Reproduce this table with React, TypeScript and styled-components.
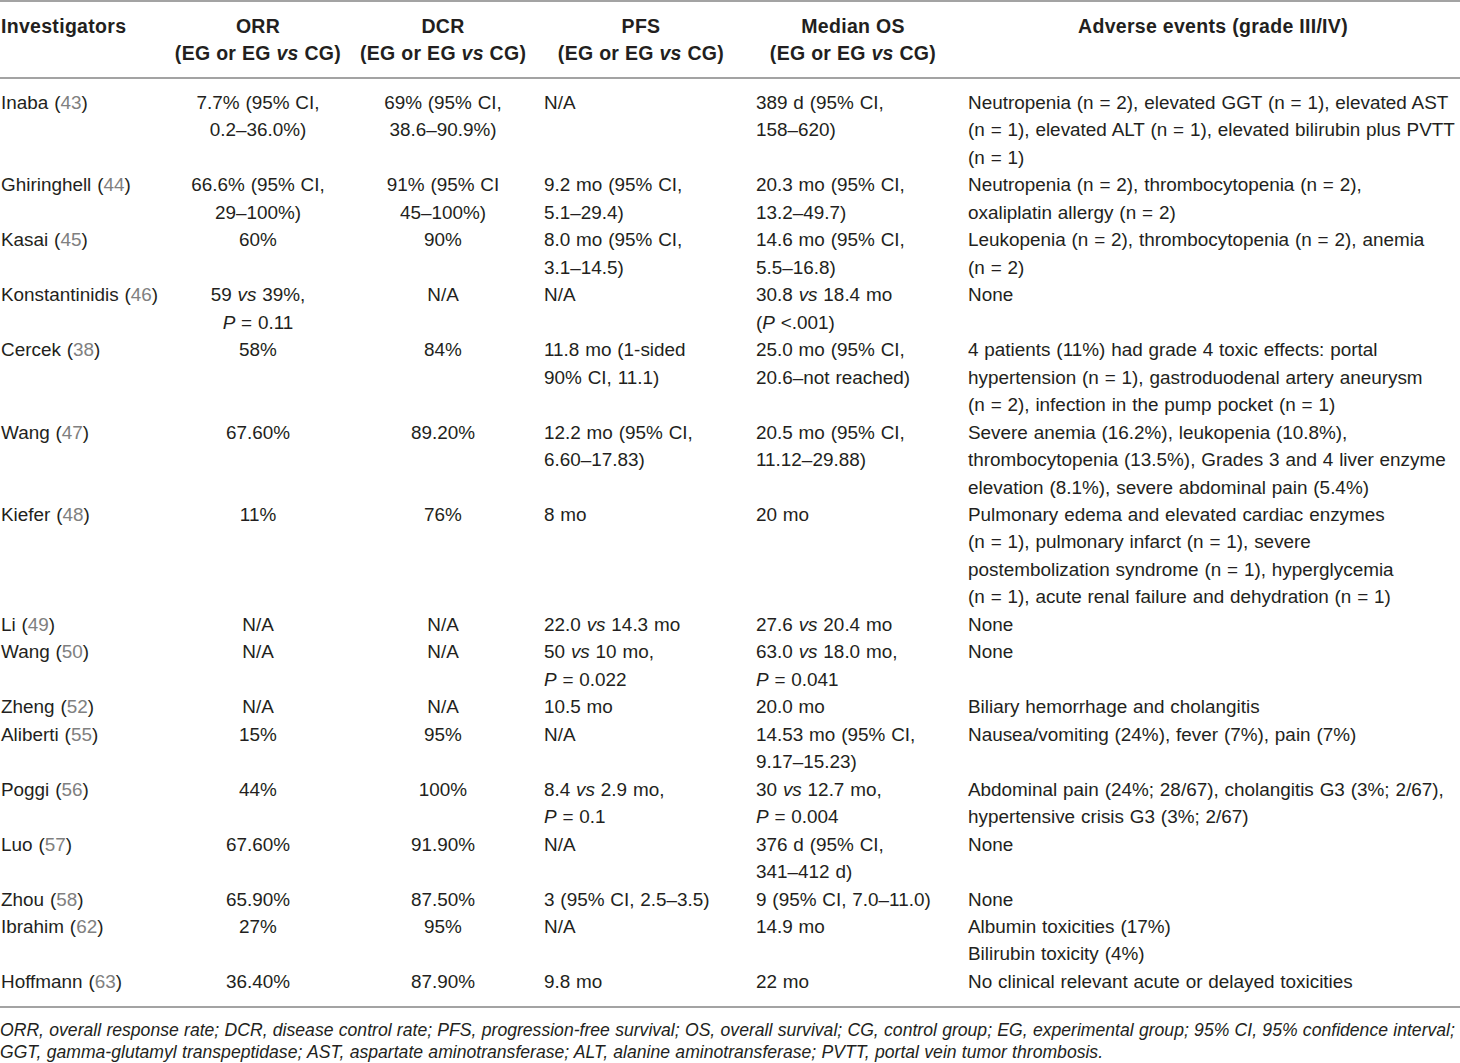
import React from "react";
import styled, { createGlobalStyle } from "styled-components";

const GlobalStyle = createGlobalStyle`
  html, body { margin: 0; padding: 0; background: #ffffff; }
`;

const Page = styled.div`
  width: 1460px;
  font-family: "Liberation Sans", Arial, sans-serif;
  color: #231f20;
`;

const Table = styled.table`
  width: 1460px;
  border-collapse: collapse;
  table-layout: fixed;
  font-size: 18.9px;
  word-spacing: 0.6px;
  line-height: 27.47px;
  border-top: 2px solid #a3a3a3;
  border-bottom: 2px solid #a3a3a3;
`;

const HeadRow = styled.tr`
  border-bottom: 2px solid #a3a3a3;
`;

const HeadCell = styled.th<{ $align?: "left" | "center" }>`
  font-weight: bold;
  font-size: 19.5px;
  letter-spacing: 0.3px;
  word-spacing: 0;
  text-align: ${(p) => p.$align || "center"};
  vertical-align: top;
  padding: 11px 9px 9px;
  &:first-child { padding-left: 1px; }
  &:last-child { padding-right: 2px; }
`;

const Row = styled.tr<{ $first?: boolean; $last?: boolean }>`
  & > td {
    padding-top: ${(p) => (p.$first ? "10px" : "0")};
    padding-bottom: ${(p) => (p.$last ? "11px" : "0")};
  }
`;

const Cell = styled.td<{ $align?: "left" | "center" }>`
  text-align: ${(p) => p.$align || "left"};
  vertical-align: top;
  padding-left: 9px;
  padding-right: 9px;
  &:first-child { padding-left: 1px; padding-right: 0; }
  &:last-child { padding-right: 2px; }
`;

const Line = styled.span`
  display: block;
  white-space: nowrap;
`;

const Ref = styled.span`
  color: #808080;
`;

const Em = styled.i`
  font-style: italic;
`;

const Footnote = styled.div`
  font-style: italic;
  font-size: 17.6px;
  word-spacing: 0.4px;
  line-height: 22px;
  padding-top: 11px;
  white-space: nowrap;
`;

type Content = React.ReactNode[];

interface RowData {
  name: string;
  ref: string;
  orr: Content;
  dcr: Content;
  pfs: Content;
  os: Content;
  ae: Content;
}

const rows: RowData[] = [
  {
    name: "Inaba",
    ref: "43",
    orr: ["7.7% (95% CI,", "0.2–36.0%)"],
    dcr: ["69% (95% CI,", "38.6–90.9%)"],
    pfs: ["N/A"],
    os: ["389 d (95% CI,", "158–620)"],
    ae: [
      "Neutropenia (n = 2), elevated GGT (n = 1), elevated AST",
      "(n = 1), elevated ALT (n = 1), elevated bilirubin plus PVTT",
      "(n = 1)",
    ],
  },
  {
    name: "Ghiringhell",
    ref: "44",
    orr: ["66.6% (95% CI,", "29–100%)"],
    dcr: ["91% (95% CI", "45–100%)"],
    pfs: ["9.2 mo (95% CI,", "5.1–29.4)"],
    os: ["20.3 mo (95% CI,", "13.2–49.7)"],
    ae: ["Neutropenia (n = 2), thrombocytopenia (n = 2),", "oxaliplatin allergy (n = 2)"],
  },
  {
    name: "Kasai",
    ref: "45",
    orr: ["60%"],
    dcr: ["90%"],
    pfs: ["8.0 mo (95% CI,", "3.1–14.5)"],
    os: ["14.6 mo (95% CI,", "5.5–16.8)"],
    ae: ["Leukopenia (n = 2), thrombocytopenia (n = 2), anemia", "(n = 2)"],
  },
  {
    name: "Konstantinidis",
    ref: "46",
    orr: [
      <>59 <Em>vs</Em> 39%,</>,
      <><Em>P</Em> = 0.11</>,
    ],
    dcr: ["N/A"],
    pfs: ["N/A"],
    os: [
      <>30.8 <Em>vs</Em> 18.4 mo</>,
      <>(<Em>P</Em> &lt;.001)</>,
    ],
    ae: ["None"],
  },
  {
    name: "Cercek",
    ref: "38",
    orr: ["58%"],
    dcr: ["84%"],
    pfs: ["11.8 mo (1-sided", "90% CI, 11.1)"],
    os: ["25.0 mo (95% CI,", "20.6–not reached)"],
    ae: [
      "4 patients (11%) had grade 4 toxic effects: portal",
      "hypertension (n = 1), gastroduodenal artery aneurysm",
      "(n = 2), infection in the pump pocket (n = 1)",
    ],
  },
  {
    name: "Wang",
    ref: "47",
    orr: ["67.60%"],
    dcr: ["89.20%"],
    pfs: ["12.2 mo (95% CI,", "6.60–17.83)"],
    os: ["20.5 mo (95% CI,", "11.12–29.88)"],
    ae: [
      "Severe anemia (16.2%), leukopenia (10.8%),",
      "thrombocytopenia (13.5%), Grades 3 and 4 liver enzyme",
      "elevation (8.1%), severe abdominal pain (5.4%)",
    ],
  },
  {
    name: "Kiefer",
    ref: "48",
    orr: ["11%"],
    dcr: ["76%"],
    pfs: ["8 mo"],
    os: ["20 mo"],
    ae: [
      "Pulmonary edema and elevated cardiac enzymes",
      "(n = 1), pulmonary infarct (n = 1), severe",
      "postembolization syndrome (n = 1), hyperglycemia",
      "(n = 1), acute renal failure and dehydration (n = 1)",
    ],
  },
  {
    name: "Li",
    ref: "49",
    orr: ["N/A"],
    dcr: ["N/A"],
    pfs: [<>22.0 <Em>vs</Em> 14.3 mo</>],
    os: [<>27.6 <Em>vs</Em> 20.4 mo</>],
    ae: ["None"],
  },
  {
    name: "Wang",
    ref: "50",
    orr: ["N/A"],
    dcr: ["N/A"],
    pfs: [<>50 <Em>vs</Em> 10 mo,</>, <><Em>P</Em> = 0.022</>],
    os: [<>63.0 <Em>vs</Em> 18.0 mo,</>, <><Em>P</Em> = 0.041</>],
    ae: ["None"],
  },
  {
    name: "Zheng",
    ref: "52",
    orr: ["N/A"],
    dcr: ["N/A"],
    pfs: ["10.5 mo"],
    os: ["20.0 mo"],
    ae: ["Biliary hemorrhage and cholangitis"],
  },
  {
    name: "Aliberti",
    ref: "55",
    orr: ["15%"],
    dcr: ["95%"],
    pfs: ["N/A"],
    os: ["14.53 mo (95% CI,", "9.17–15.23)"],
    ae: ["Nausea/vomiting (24%), fever (7%), pain (7%)"],
  },
  {
    name: "Poggi",
    ref: "56",
    orr: ["44%"],
    dcr: ["100%"],
    pfs: [<>8.4 <Em>vs</Em> 2.9 mo,</>, <><Em>P</Em> = 0.1</>],
    os: [<>30 <Em>vs</Em> 12.7 mo,</>, <><Em>P</Em> = 0.004</>],
    ae: [
      "Abdominal pain (24%; 28/67), cholangitis G3 (3%; 2/67),",
      "hypertensive crisis G3 (3%; 2/67)",
    ],
  },
  {
    name: "Luo",
    ref: "57",
    orr: ["67.60%"],
    dcr: ["91.90%"],
    pfs: ["N/A"],
    os: ["376 d (95% CI,", "341–412 d)"],
    ae: ["None"],
  },
  {
    name: "Zhou",
    ref: "58",
    orr: ["65.90%"],
    dcr: ["87.50%"],
    pfs: ["3 (95% CI, 2.5–3.5)"],
    os: ["9 (95% CI, 7.0–11.0)"],
    ae: ["None"],
  },
  {
    name: "Ibrahim",
    ref: "62",
    orr: ["27%"],
    dcr: ["95%"],
    pfs: ["N/A"],
    os: ["14.9 mo"],
    ae: ["Albumin toxicities (17%)", "Bilirubin toxicity (4%)"],
  },
  {
    name: "Hoffmann",
    ref: "63",
    orr: ["36.40%"],
    dcr: ["87.90%"],
    pfs: ["9.8 mo"],
    os: ["22 mo"],
    ae: ["No clinical relevant acute or delayed toxicities"],
  },
];

const Lines: React.FC<{ items: Content }> = ({ items }) => (
  <>
    {items.map((it, i) => (
      <Line key={i}>{it}</Line>
    ))}
  </>
);

const SubHead: React.FC<{ title: string }> = ({ title }) => (
  <>
    <Line>{title}</Line>
    <Line>
      (EG or EG <Em>vs</Em> CG)
    </Line>
  </>
);

export default function App() {
  return (
    <Page>
      <GlobalStyle />
      <Table>
        <colgroup>
          <col style={{ width: 165 }} />
          <col style={{ width: 186 }} />
          <col style={{ width: 184 }} />
          <col style={{ width: 212 }} />
          <col style={{ width: 212 }} />
          <col />
        </colgroup>
        <thead>
          <HeadRow>
            <HeadCell $align="left">Investigators</HeadCell>
            <HeadCell>
              <SubHead title="ORR" />
            </HeadCell>
            <HeadCell>
              <SubHead title="DCR" />
            </HeadCell>
            <HeadCell>
              <SubHead title="PFS" />
            </HeadCell>
            <HeadCell>
              <SubHead title="Median OS" />
            </HeadCell>
            <HeadCell>Adverse events (grade III/IV)</HeadCell>
          </HeadRow>
        </thead>
        <tbody>
          {rows.map((r, i) => (
            <Row key={i} $first={i === 0} $last={i === rows.length - 1}>
              <Cell>
                <Line>
                  {r.name} (<Ref>{r.ref}</Ref>)
                </Line>
              </Cell>
              <Cell $align="center">
                <Lines items={r.orr} />
              </Cell>
              <Cell $align="center">
                <Lines items={r.dcr} />
              </Cell>
              <Cell>
                <Lines items={r.pfs} />
              </Cell>
              <Cell>
                <Lines items={r.os} />
              </Cell>
              <Cell>
                <Lines items={r.ae} />
              </Cell>
            </Row>
          ))}
        </tbody>
      </Table>
      <Footnote>
        <Line>
          ORR, overall response rate; DCR, disease control rate; PFS, progression-free survival; OS, overall survival; CG, control group; EG, experimental group; 95% CI, 95% confidence interval;
        </Line>
        <Line>
          GGT, gamma-glutamyl transpeptidase; AST, aspartate aminotransferase; ALT, alanine aminotransferase; PVTT, portal vein tumor thrombosis.
        </Line>
      </Footnote>
    </Page>
  );
}
